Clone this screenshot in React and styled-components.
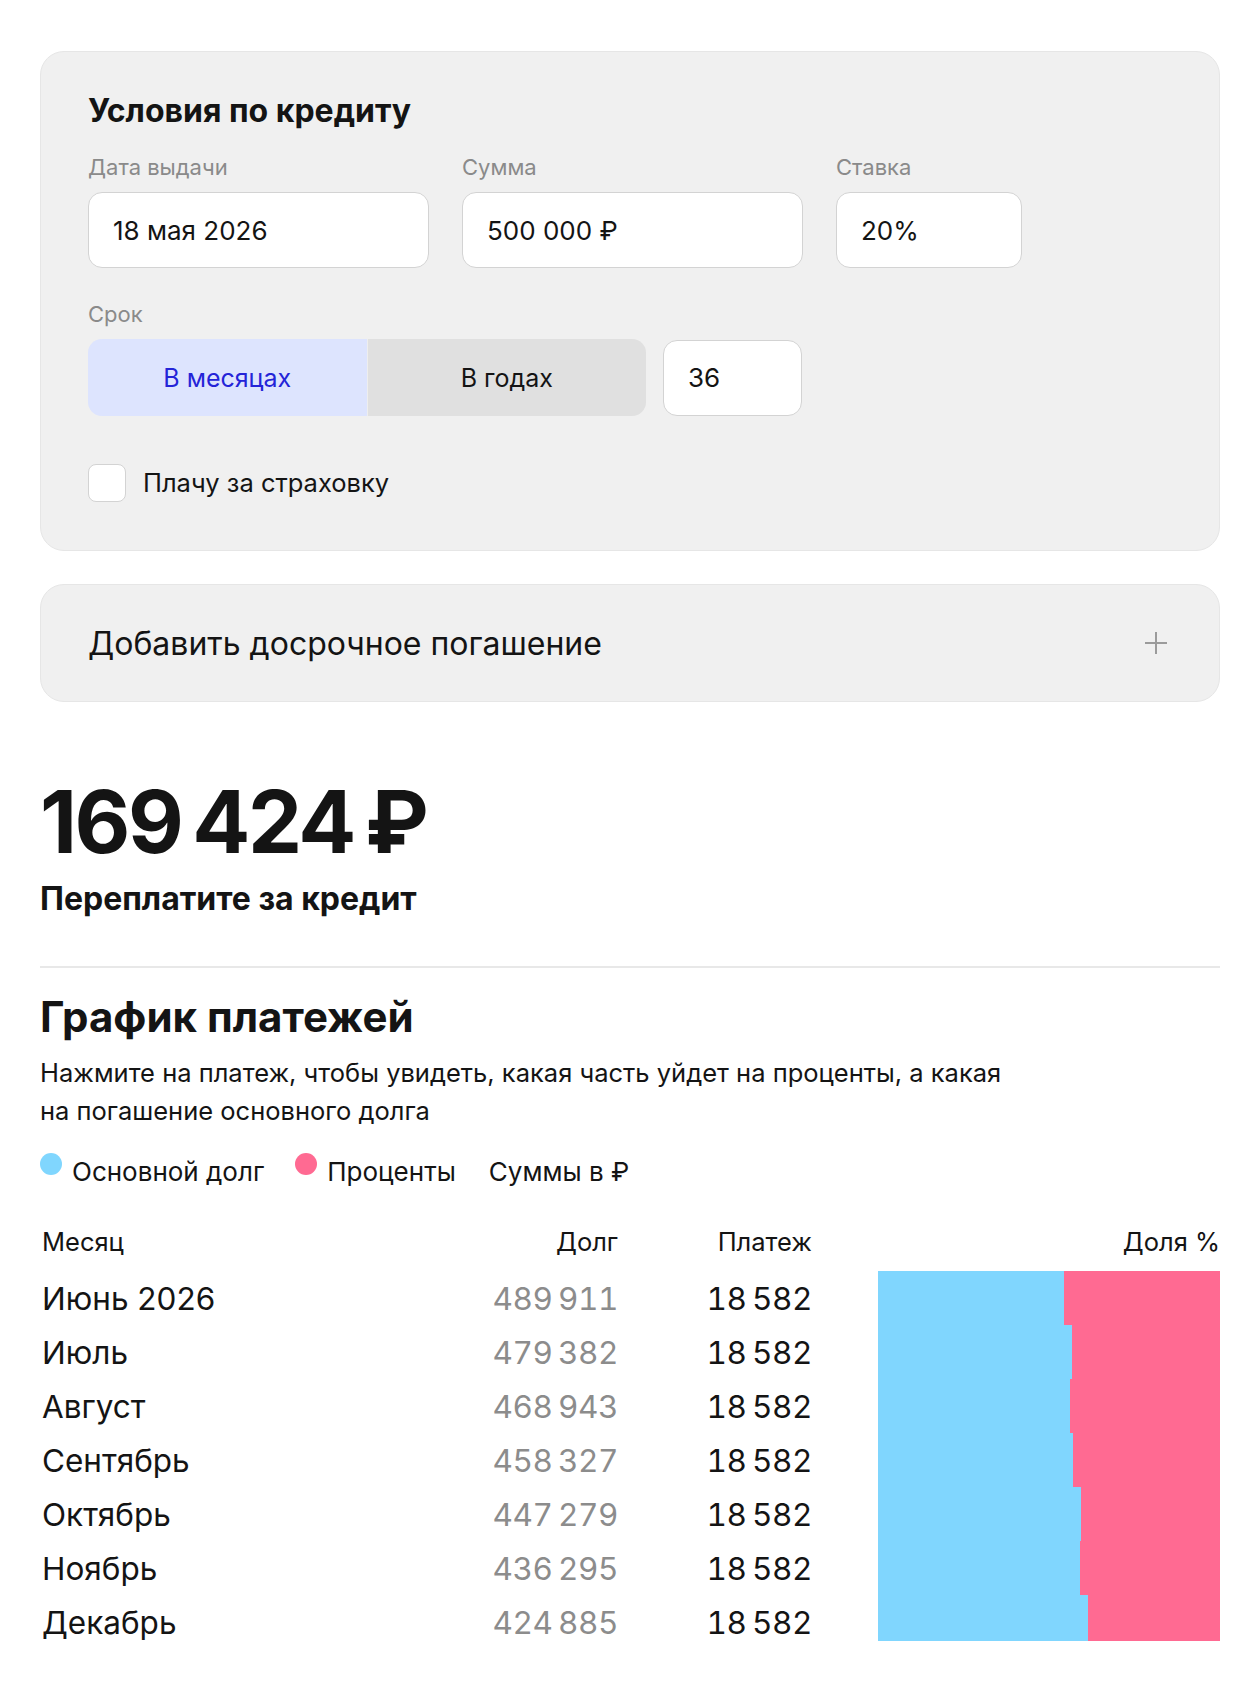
import React, { useState } from 'react';
import styled, { createGlobalStyle } from 'styled-components';

const GlobalStyle = createGlobalStyle`
  * { box-sizing: border-box; }
  body {
    margin: 0;
    background: #ffffff;
    color: #141414;
    font-family: Inter, "Noto Sans", "Liberation Sans", sans-serif;
  }
`;

const Page = styled.main`
  width: 1260px;
  padding: 51px 40px 60px;
`;

const Card = styled.section`
  background: #f0f0f0;
  border: 1px solid #e6e6e6;
  border-radius: 24px;
`;

const ConditionsCard = styled(Card)`
  padding: 42px 47px 48px;
`;

const CardTitle = styled.h2`
  margin: 0;
  font-size: 32px;
  line-height: 34px;
  font-weight: 700;
`;

const FieldsRow = styled.div`
  display: flex;
  gap: 33px;
  margin-top: ${p => p.top || 0}px;
`;

const Field = styled.div`
  display: flex;
  flex-direction: column;
`;

const Label = styled.span`
  font-size: 22px;
  line-height: 28px;
  color: #8a8a8a;
  margin-bottom: 11px;
`;

const TextInput = styled.input`
  width: ${p => p.w}px;
  height: 76px;
  padding: 0 24px;
  border: 1.5px solid #d3d3d3;
  border-radius: 14px;
  background: #ffffff;
  font-family: inherit;
  font-size: 26px;
  color: #141414;
  outline: none;
`;

const TermRow = styled.div`
  display: flex;
  gap: 17px;
  align-items: center;
`;

const Segmented = styled.div`
  display: flex;
  gap: 1px;
  width: 558px;
  height: 77px;
  border-radius: 14px;
  overflow: hidden;
  background: #eeeeee;
`;

const SegmentButton = styled.button`
  flex: 1;
  border: 0;
  font-family: inherit;
  font-size: 25px;
  cursor: pointer;
  background: ${p => (p.active ? '#dde4fe' : '#e0e0e0')};
  color: ${p => (p.active ? '#2424d8' : '#141414')};
`;

const CheckRow = styled.label`
  display: flex;
  align-items: center;
  gap: 17px;
  margin-top: 48px;
  font-size: 25.5px;
  line-height: 30px;
  cursor: pointer;
`;

const CheckBox = styled.span`
  width: 38px;
  height: 38px;
  border-radius: 8px;
  border: 1.5px solid #d3d3d3;
  background: ${p => (p.checked ? '#2424d8' : '#ffffff')};
`;

const EarlyCard = styled(Card)`
  margin-top: 33px;
  height: 118px;
  padding: 0 51px 0 47px;
  display: flex;
  align-items: center;
  justify-content: space-between;
  font-size: 32px;
  cursor: pointer;
`;

const PlusIcon = () => (
  <svg width="24" height="24" viewBox="0 0 24 24">
    <path d="M12 1v22M1 12h22" stroke="#9b9b9b" strokeWidth="2" />
  </svg>
);

const Total = styled.div`
  margin-top: 78px;
  font-size: 86px;
  line-height: 84px;
  font-weight: 700;
  letter-spacing: -2.5px;
`;

const TotalCaption = styled.div`
  margin-top: 18px;
  font-size: 32px;
  line-height: 34px;
  font-weight: 700;
`;

const Divider = styled.hr`
  margin: 50px 0 0;
  border: 0;
  height: 2px;
  background: #e8e8e8;
`;

const SectionTitle = styled.h2`
  margin: 25px 0 0;
  font-size: 42px;
  line-height: 48px;
  font-weight: 700;
`;

const Description = styled.p`
  margin: 13px 0 0;
  font-size: 25.5px;
  line-height: 38px;
`;

const Legend = styled.div`
  display: flex;
  align-items: flex-start;
  margin-top: 27px;
  font-size: 26px;
  line-height: 30px;
`;

const LegendItem = styled.span`
  display: flex;
  align-items: flex-start;
  gap: 10px;
  margin-right: ${p => p.gap || 0}px;
`;

const Dot = styled.span`
  width: 22px;
  height: 22px;
  margin-top: -4px;
  border-radius: 50%;
  background: ${p => p.color};
`;

const Table = styled.div`
  margin-top: 39px;
`;

const Row = styled.div`
  display: grid;
  grid-template-columns: 1fr 200px 194px 408px;
  align-items: center;
  height: ${p => (p.head ? 30 : 54)}px;
  margin-bottom: ${p => (p.head ? 15 : 0)}px;
  font-size: ${p => (p.head ? 25.5 : 31.5)}px;
`;

const Cell = styled.span`
  text-align: ${p => p.align || 'left'};
  color: ${p => (p.muted ? '#8c8c8c' : '#141414')};
  padding-right: ${p => p.pr || 0}px;
  padding-left: ${p => p.pl || 0}px;
`;

const Num = styled(Cell)`
  font-variant-numeric: tabular-nums;
  letter-spacing: -0.4px;
`;

const BarCell = styled.div`
  display: flex;
  align-self: start;
  margin-left: 66px;
  width: 342px;
  height: ${p => p.h}px;
`;

const Bar = styled.div`
  height: 100%;
  background: ${p => p.color};
  flex: ${p => (p.grow ? 1 : 'none')};
`;

const BLUE = '#80d6fe';
const PINK = '#ff6a92';
const PAYMENT = 18582;

const schedule = [
  { month: 'Июнь 2026', debt: 489911, principal: 10089 },
  { month: 'Июль', debt: 479382, principal: 10529 },
  { month: 'Август', debt: 468943, principal: 10439 },
  { month: 'Сентябрь', debt: 458327, principal: 10616 },
  { month: 'Октябрь', debt: 447279, principal: 11048 },
  { month: 'Ноябрь', debt: 436295, principal: 10984 },
  { month: 'Декабрь', debt: 424885, principal: 11410 },
];

const fmt = n => String(n).replace(/\B(?=(\d{3})+(?!\d))/g, '\u2009');

export default function App() {
  const [inMonths, setInMonths] = useState(true);
  const [insurance, setInsurance] = useState(false);

  return (
    <Page>
      <GlobalStyle />
      <ConditionsCard>
        <CardTitle>Условия по кредиту</CardTitle>
        <FieldsRow top={25}>
          <Field>
            <Label>Дата выдачи</Label>
            <TextInput w={341} defaultValue="18 мая 2026" />
          </Field>
          <Field>
            <Label>Сумма</Label>
            <TextInput w={341} defaultValue="500 000 ₽" />
          </Field>
          <Field>
            <Label>Ставка</Label>
            <TextInput w={186} defaultValue="20%" />
          </Field>
        </FieldsRow>
        <FieldsRow top={32}>
          <Field>
            <Label>Срок</Label>
            <TermRow>
              <Segmented>
                <SegmentButton active={inMonths} onClick={() => setInMonths(true)}>
                  В месяцах
                </SegmentButton>
                <SegmentButton active={!inMonths} onClick={() => setInMonths(false)}>
                  В годах
                </SegmentButton>
              </Segmented>
              <TextInput w={139} defaultValue="36" />
            </TermRow>
          </Field>
        </FieldsRow>
        <CheckRow onClick={() => setInsurance(!insurance)}>
          <CheckBox checked={insurance} />
          Плачу за страховку
        </CheckRow>
      </ConditionsCard>

      <EarlyCard>
        Добавить досрочное погашение
        <PlusIcon />
      </EarlyCard>

      <Total>169{'\u2009'}424{'\u2009'}₽</Total>
      <TotalCaption>Переплатите за кредит</TotalCaption>

      <Divider />

      <SectionTitle>График платежей</SectionTitle>
      <Description>
        Нажмите на платеж, чтобы увидеть, какая часть уйдет на проценты, а какая
        <br />
        на погашение основного долга
      </Description>

      <Legend>
        <LegendItem gap={31}>
          <Dot color={BLUE} />
          Основной долг
        </LegendItem>
        <LegendItem gap={33}>
          <Dot color={PINK} />
          Проценты
        </LegendItem>
        <LegendItem>Суммы в ₽</LegendItem>
      </Legend>

      <Table>
        <Row head>
          <Cell pl={2}>Месяц</Cell>
          <Cell align="right">Долг</Cell>
          <Cell align="right">Платеж</Cell>
          <Cell align="right">Доля %</Cell>
        </Row>
        {schedule.map((r, i) => (
          <Row key={r.month}>
            <Cell pl={2}>{r.month}</Cell>
            <Num align="right" muted>{fmt(r.debt)}</Num>
            <Num align="right">{fmt(PAYMENT)}</Num>
            <BarCell h={i === schedule.length - 1 ? 46 : 54}>
              <Bar color={BLUE} style={{ width: `${(r.principal / PAYMENT) * 100}%` }} />
              <Bar color={PINK} grow />
            </BarCell>
          </Row>
        ))}
      </Table>
    </Page>
  );
}
